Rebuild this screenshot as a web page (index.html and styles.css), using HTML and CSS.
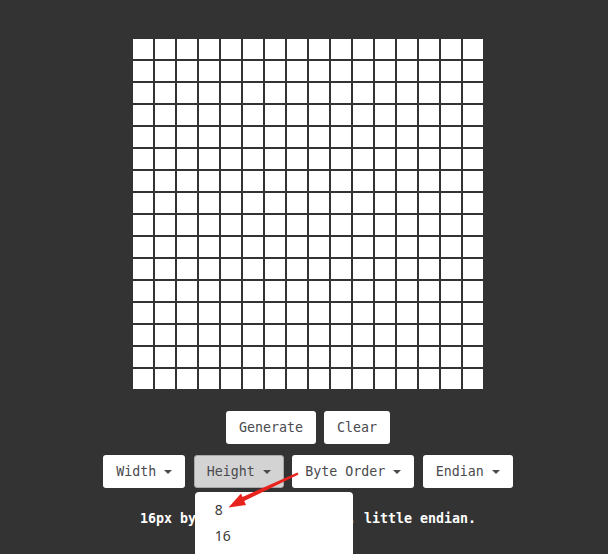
FILE: index.html
```html
<!DOCTYPE html>
<html>
<head>
<meta charset="utf-8">
<link rel="stylesheet" href="styles.css">
</head>
<body>
<main class="app">
  <div class="grid">
    <span></span><span></span><span></span><span></span><span></span><span></span><span></span><span></span><span></span><span></span><span></span><span></span><span></span><span></span><span></span><span></span>
    <span></span><span></span><span></span><span></span><span></span><span></span><span></span><span></span><span></span><span></span><span></span><span></span><span></span><span></span><span></span><span></span>
    <span></span><span></span><span></span><span></span><span></span><span></span><span></span><span></span><span></span><span></span><span></span><span></span><span></span><span></span><span></span><span></span>
    <span></span><span></span><span></span><span></span><span></span><span></span><span></span><span></span><span></span><span></span><span></span><span></span><span></span><span></span><span></span><span></span>
    <span></span><span></span><span></span><span></span><span></span><span></span><span></span><span></span><span></span><span></span><span></span><span></span><span></span><span></span><span></span><span></span>
    <span></span><span></span><span></span><span></span><span></span><span></span><span></span><span></span><span></span><span></span><span></span><span></span><span></span><span></span><span></span><span></span>
    <span></span><span></span><span></span><span></span><span></span><span></span><span></span><span></span><span></span><span></span><span></span><span></span><span></span><span></span><span></span><span></span>
    <span></span><span></span><span></span><span></span><span></span><span></span><span></span><span></span><span></span><span></span><span></span><span></span><span></span><span></span><span></span><span></span>
    <span></span><span></span><span></span><span></span><span></span><span></span><span></span><span></span><span></span><span></span><span></span><span></span><span></span><span></span><span></span><span></span>
    <span></span><span></span><span></span><span></span><span></span><span></span><span></span><span></span><span></span><span></span><span></span><span></span><span></span><span></span><span></span><span></span>
    <span></span><span></span><span></span><span></span><span></span><span></span><span></span><span></span><span></span><span></span><span></span><span></span><span></span><span></span><span></span><span></span>
    <span></span><span></span><span></span><span></span><span></span><span></span><span></span><span></span><span></span><span></span><span></span><span></span><span></span><span></span><span></span><span></span>
    <span></span><span></span><span></span><span></span><span></span><span></span><span></span><span></span><span></span><span></span><span></span><span></span><span></span><span></span><span></span><span></span>
    <span></span><span></span><span></span><span></span><span></span><span></span><span></span><span></span><span></span><span></span><span></span><span></span><span></span><span></span><span></span><span></span>
    <span></span><span></span><span></span><span></span><span></span><span></span><span></span><span></span><span></span><span></span><span></span><span></span><span></span><span></span><span></span><span></span>
    <span></span><span></span><span></span><span></span><span></span><span></span><span></span><span></span><span></span><span></span><span></span><span></span><span></span><span></span><span></span><span></span>
  </div>

  <div class="row row-actions">
    <button class="btn">Generate</button>
    <button class="btn">Clear</button>
  </div>

  <div class="row row-options">
    <div class="dropdown"><button class="btn">Width <i class="caret"></i></button></div>
    <div class="dropdown open">
      <button class="btn btn-active">Height <i class="caret"></i></button>
      <ul class="menu">
        <li class="menu-item">8</li>
        <li class="menu-item">16</li>
      </ul>
    </div>
    <div class="dropdown"><button class="btn">Byte Order <i class="caret"></i></button></div>
    <div class="dropdown"><button class="btn">Endian <i class="caret"></i></button></div>
  </div>

  <p class="summary">16px by 16px, 2 bytes, MSB, little endian.</p>

  <svg class="pointer" width="608" height="554" viewBox="0 0 608 554">
    <polygon points="297.5,472.5 298.5,474.5 240,503 238,499" fill="#e8231d"/>
    <polygon points="228.5,507.5 241,493.5 246,505" fill="#e8231d"/>
  </svg>
</main>
</body>
</html>
```

FILE: styles.css
```css
html, body {
  margin: 0;
  padding: 0;
  background: #333333;
}

.app {
  position: relative;
  width: 608px;
  height: 554px;
  overflow: hidden;
  box-sizing: border-box;
  padding: 39px 0 0 8px;
  display: flex;
  flex-direction: column;
  align-items: center;
  font-family: "DejaVu Sans Mono", "Liberation Mono", monospace;
}

.grid {
  display: grid;
  grid-template-columns: repeat(16, 20px);
  grid-auto-rows: 20px;
  gap: 2px;
}

.grid span {
  background: #ffffff;
}

.row {
  display: flex;
  gap: 8px;
  justify-content: center;
}

.row-actions {
  margin-top: 22px;
}

.row-options {
  margin-top: 11px;
  gap: 8.5px;
}

.btn {
  height: 33px;
  box-sizing: border-box;
  padding: 0 12px;
  border: 1px solid transparent;
  border-radius: 3px;
  background: #ffffff;
  color: #4a4a4f;
  font-family: "DejaVu Sans Mono", "Liberation Mono", monospace;
  font-size: 13.3px;
  line-height: 18px;
  display: inline-flex;
  align-items: center;
  white-space: pre;
  cursor: pointer;
}

.btn-active {
  background: #d3d3d3;
  border-color: #a9a9a9;
}

.caret {
  display: inline-block;
  width: 0;
  height: 0;
  border-left: 4px solid transparent;
  border-right: 4px solid transparent;
  border-top: 4px solid #4a4a4f;
  margin-top: 1px;
}

.dropdown {
  position: relative;
}

.menu {
  position: absolute;
  top: 37px;
  left: 1px;
  width: 158px;
  height: 80px;
  box-sizing: border-box;
  margin: 0;
  padding: 5px 0;
  list-style: none;
  background: #ffffff;
  border-radius: 4px;
  z-index: 2;
}

.menu-item {
  padding: 0 20px;
  line-height: 26px;
  font-family: "Noto Sans", "Open Sans", sans-serif;
  font-size: 14px;
  color: #3b3b3b;
}

.summary {
  margin: 22px 0 0;
  color: #ffffff;
  font-weight: bold;
  font-size: 13.3px;
  line-height: 18px;
  white-space: pre;
}

.pointer {
  position: absolute;
  left: 0;
  top: 0;
  z-index: 3;
  pointer-events: none;
}
```
